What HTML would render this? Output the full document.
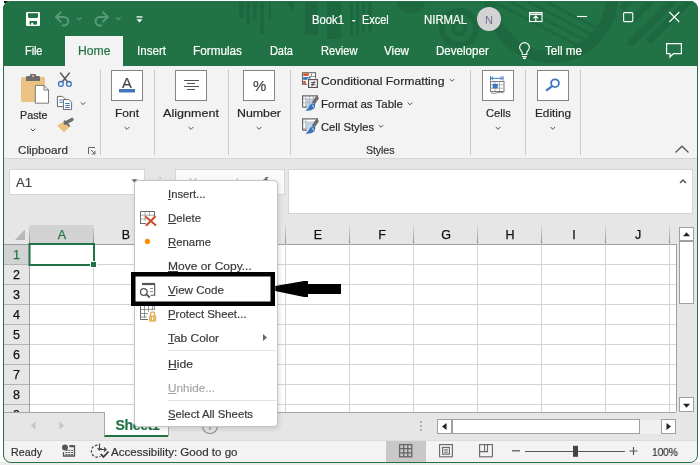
<!DOCTYPE html>
<html lang="en"><head><meta charset="utf-8"><title>Book1 - Excel</title>
<style>
html,body{margin:0;padding:0;}
body{width:700px;height:465px;overflow:hidden;background:#fff;font-family:"Liberation Sans",sans-serif;position:relative;}
#below{position:absolute;left:0;top:462px;width:700px;height:3px;background:#ececec;}
#win{position:absolute;left:3px;top:1px;width:695px;height:462px;border-radius:8px;overflow:hidden;background:#e6e6e6;}
#frame{position:absolute;left:3px;top:1px;width:693px;height:460px;border-radius:8px;border:1px solid #217346;pointer-events:none;}
.a{position:absolute;}
.t{position:absolute;white-space:nowrap;line-height:20px;height:20px;transform-origin:0 50%;-webkit-text-stroke:0.2px currentColor;}
.t u{text-decoration:underline;text-underline-offset:1px;}
#titlebar{left:0;top:0;width:695px;height:65px;background:#217346;}
#hometab{left:62px;top:35px;width:58px;height:31px;background:#f3f3f3;}
#ribbon{left:0;top:65px;width:695px;height:92px;background:#f3f3f3;border-bottom:1px solid #d4d4d4;}
.sep{position:absolute;top:69px;width:1px;height:85px;background:#c8c8c8;}
.bigbtn{position:absolute;top:69px;width:30px;height:29px;border:1px solid #848484;background:#fff;}
#namebox{left:6px;top:168px;width:134px;height:24px;border:1px solid #d6d6d6;background:#fff;}
#fxbtns{left:172px;top:168px;width:108px;height:24px;border:1px solid #d6d6d6;background:#fafafa;}
#fxinput{left:285px;top:168px;width:403px;height:43px;border:1px solid #d6d6d6;background:#fff;}
#grid{left:26px;top:244px;width:647px;height:168px;background:#fff;}
#colhdr{left:1px;top:224px;width:672px;height:19px;background:#e6e6e6;border-bottom:1px solid #9e9e9e;}
#rowhdr{left:1px;top:244px;width:25px;height:168px;background:#e6e6e6;border-right:1px solid #9e9e9e;}
.hl{position:absolute;background:#d2d2d2;}
.colh{position:absolute;top:0;height:18px;width:64px;text-align:center;font-size:12.5px;line-height:20px;color:#111;-webkit-text-stroke:0.25px currentColor;}
.rowh{position:absolute;left:0;width:25px;height:20px;text-align:center;font-size:12.5px;line-height:20px;color:#111;-webkit-text-stroke:0.25px currentColor;}
#tabbar{left:0;top:411px;width:695px;height:28px;background:#e6e6e6;}
#statusbar{left:0;top:439px;width:695px;height:23px;background:#f3f3f3;border-top:1px solid #dcdcdc;box-sizing:border-box;}
#sheettab{left:101px;top:411px;width:64px;height:23px;background:#fff;border-bottom:2px solid #217346;}
#menu{position:absolute;left:131px;top:179px;width:144px;height:247px;box-sizing:border-box;border:1px solid #c4c4c4;background:#fff;border-radius:4px;box-shadow:1px 2px 5px rgba(0,0,0,0.13);}
.msep{position:absolute;left:33px;width:108px;height:1px;background:#dfe2e6;}
svg{position:absolute;overflow:visible;}

#texts,#win{will-change:transform;}

</style></head>
<body>
<div id="below"></div>
<div id="blob" style="position:absolute;left:4px;top:1px;width:4px;height:2px;background:#111"></div>
<div id="win">
  <div class="a" id="titlebar"></div>
  <svg id="pattern" style="left:0;top:0" width="695" height="65" viewBox="3 1 695 65">
    <g fill="#1d683e">
      <rect x="239" y="1" width="5" height="17"/>
      <rect x="246" y="1" width="4" height="24"/>
      <rect x="253" y="1" width="4" height="19"/>
      <rect x="260" y="1" width="4" height="33"/>
      <rect x="269" y="1" width="2" height="20"/>
      <polygon points="285,1 294,1 294,12"/>
      <rect x="305" y="1" width="13" height="34"/>
      <rect x="327" y="1" width="14" height="38"/>
      <rect x="350" y="1" width="3" height="36"/>
      <rect x="356" y="1" width="3" height="36"/>
      <rect x="362" y="1" width="3" height="32"/>
      <rect x="368" y="1" width="4" height="30"/>
      <path d="M397,1 A14,12 0 0 0 425,1 Z"/>
    </g>
    <defs><clipPath id="ringclip"><circle cx="552" cy="-4" r="56"/></clipPath></defs>
    <g fill="none" stroke="#1d683e">
      <circle cx="459" cy="28" r="6" stroke-width="4"/>
      <circle cx="459" cy="28" r="17" stroke-width="6"/>
      <circle cx="551" cy="-4" r="61" stroke-width="12"/>
      <g clip-path="url(#ringclip)"><path d="M496,3 L596,55 M500,-4 L600,48 M504,-11 L604,41 M508,-18 L608,34" stroke-width="2.6"/></g>
      <path d="M633,-2 L622,9 M654,-2 L632,20 M676,-2 L629,45 M692,-2 L648,42" stroke-width="7"/>
    </g>
  </svg>
  <div class="a" id="hometab"></div>
  <div class="a" id="ribbon"></div>
  <div class="sep" style="left:97px"></div>
  <div class="sep" style="left:151px"></div>
  <div class="sep" style="left:225px"></div>
  <div class="sep" style="left:287px"></div>
  <div class="sep" style="left:467px"></div>
  <div class="sep" style="left:522px"></div>
  <div class="sep" style="left:577px"></div>
  <div class="bigbtn" style="left:108px"></div>
  <div class="bigbtn" style="left:172px"></div>
  <div class="bigbtn" style="left:240px"></div>
  <div class="bigbtn" style="left:479px"></div>
  <div class="bigbtn" style="left:534px"></div>

  <div class="a" id="namebox"></div>
  <div class="a" id="fxbtns"></div>
  <div class="a" id="fxinput"></div>

  <div class="a" id="colhdr">
    <div class="hl" style="left:26px;top:0;width:64px;height:19px"></div>
    <div class="colh" style="left:26px;color:#217346">A</div>
    <div class="colh" style="left:90px">B</div>
    <div class="colh" style="left:154px">C</div>
    <div class="colh" style="left:218px">D</div>
    <div class="colh" style="left:282px">E</div>
    <div class="colh" style="left:346px">F</div>
    <div class="colh" style="left:410px">G</div>
    <div class="colh" style="left:474px">H</div>
    <div class="colh" style="left:538px">I</div>
    <div class="colh" style="left:602px">J</div>
  </div>
  <div class="a" id="grid"></div>
  <div class="a" id="rowhdr">
    <div class="hl" style="left:0;top:0;width:25px;height:19px"></div>
    <div class="rowh" style="top:0px;color:#217346">1</div>
    <div class="rowh" style="top:20px">2</div>
    <div class="rowh" style="top:40px">3</div>
    <div class="rowh" style="top:60px">4</div>
    <div class="rowh" style="top:80px">5</div>
    <div class="rowh" style="top:100px">6</div>
    <div class="rowh" style="top:120px">7</div>
    <div class="rowh" style="top:140px">8</div>
    <div class="rowh" style="top:160px">9</div>
  </div>
  <svg id="gridlines" style="left:0;top:0" width="695" height="462" viewBox="3 1 695 462">
    <g stroke="#d4d4d4" stroke-width="1" shape-rendering="crispEdges">
      <path d="M30,264.5H676 M30,284.5H676 M30,304.5H676 M30,324.5H676 M30,344.5H676 M30,364.5H676 M30,384.5H676 M30,404.5H676"/>
      <path d="M93.5,244V412 M157.5,244V412 M221.5,244V412 M285.5,244V412 M349.5,244V412 M413.5,244V412 M477.5,244V412 M541.5,244V412 M605.5,244V412 M669.5,244V412"/>
    </g>
    <defs><linearGradient id="hsep" x1="0" y1="225" x2="0" y2="244" gradientUnits="userSpaceOnUse"><stop offset="0" stop-color="#dcdcdc"/><stop offset="1" stop-color="#8e8e8e"/></linearGradient></defs>
    <g fill="url(#hsep)" shape-rendering="crispEdges">
      <rect x="29" y="225" width="1" height="19"/><rect x="93" y="225" width="1" height="19"/><rect x="157" y="225" width="1" height="19"/><rect x="221" y="225" width="1" height="19"/><rect x="285" y="225" width="1" height="19"/><rect x="349" y="225" width="1" height="19"/><rect x="413" y="225" width="1" height="19"/><rect x="477" y="225" width="1" height="19"/><rect x="541" y="225" width="1" height="19"/><rect x="605" y="225" width="1" height="19"/><rect x="669" y="225" width="1" height="19"/>
    </g>
    <g stroke="#b4b4b4" stroke-width="1" shape-rendering="crispEdges">
      <path d="M4,264.5H29 M4,284.5H29 M4,304.5H29 M4,324.5H29 M4,344.5H29 M4,364.5H29 M4,384.5H29 M4,404.5H29"/>
    </g>
    <polygon points="25,229.5 25,240 15,240" fill="#b8b8b8"/>
    <!-- selected cell -->
    <rect x="29.5" y="244" width="64.5" height="21" fill="none" stroke="#217346" stroke-width="2"/>
    <rect x="90.5" y="261.5" width="6" height="6" fill="#217346" stroke="#fff" stroke-width="1"/>
    <!-- sheet right border / scroll -->
    <path d="M676.5,244V412" stroke="#a0a0a0" stroke-width="1" shape-rendering="crispEdges"/>
    
  </svg>

  <div class="a" id="tabbar"></div>
  <div class="a" id="sheettab"></div>
  <div class="a" id="statusbar"></div>
  <div class="a" style="left:383px;top:440px;width:40px;height:21px;background:#c8c8c8"></div>
  <span class="t" style="left:112.5px;top:414px;font-size:14px;font-weight:bold;color:#217346;letter-spacing:-0.3px">Sheet1</span>

  <svg id="chrome" style="left:0;top:0" width="695" height="462" viewBox="3 1 695 462">
    <path d="M4,412.5H104.5V436 M168.5,436V412.5H676" fill="none" stroke="#a6a6a6" stroke-width="1" shape-rendering="crispEdges"/>
    <!-- vertical scrollbar -->
    <g shape-rendering="crispEdges">
      <rect x="679.5" y="227.5" width="14" height="13" fill="#fff" stroke="#a0a0a0"/>
      <rect x="679.5" y="241.5" width="14" height="62" fill="#fff" stroke="#a0a0a0"/>
      <rect x="679.5" y="397.5" width="14" height="14" fill="#fff" stroke="#a0a0a0"/>
      <rect x="437.5" y="419.5" width="14" height="14" fill="#fff" stroke="#a0a0a0"/>
      <rect x="452.5" y="419.5" width="187" height="14" fill="#fff" stroke="#a0a0a0"/>
      <rect x="640" y="420" width="21" height="14" fill="#f0f0f0"/>
      <rect x="661.5" y="419.5" width="14" height="14" fill="#fff" stroke="#a0a0a0"/>
    </g>
    <polygon points="683,236.2 690,236.2 686.5,232.2" fill="#222"/>
    <polygon points="683,403.8 690,403.8 686.5,407.8" fill="#222"/>
    <polygon points="446.5,423 446.5,430 442,426.5" fill="#222"/>
    <polygon points="666.5,423 666.5,430 671,426.5" fill="#222"/>
    <g fill="#b0b0b0"><rect x="420" y="421" width="2" height="2"/><rect x="420" y="425" width="2" height="2"/><rect x="420" y="429" width="2" height="2"/></g>
    <polygon points="35.5,421.5 35.5,429.5 30.8,425.5" fill="#c6c6c6"/>
    <polygon points="59.5,421.5 59.5,429.5 64.2,425.5" fill="#c6c6c6"/>
    <circle cx="210" cy="426" r="7.5" fill="none" stroke="#8a8a8a" stroke-width="1.1"/>
    <path d="M206,426H214 M210,422V430" stroke="#8a8a8a" stroke-width="1.1"/>
  </svg>

  <svg id="icons1" style="left:0;top:0" width="695" height="462" viewBox="3 1 695 462">
    <!-- ===== title bar ===== -->
    <!-- save -->
    <rect x="26" y="12" width="14" height="14" rx="1.2" fill="#fff"/>
    <path d="M28,13.2H38V17L37.2,17.9H28.8L28,17Z" fill="#217346"/>
    <rect x="29.5" y="21" width="7.5" height="3.6" fill="#217346"/>
    <rect x="31.2" y="22.8" width="2" height="2.4" fill="#fff"/>
    <!-- undo / redo (disabled look) -->
    <g fill="none" stroke="#589b79" stroke-width="2" stroke-linecap="round" stroke-linejoin="round">
      <path d="M60.8,12.4 L56,17 L60.8,21.6"/>
      <path d="M56.4,17 H64 A4.2,4.2 0 0 1 64,25.4 H62.6"/>
      <path d="M103,12.4 L107.8,17 L103,21.6"/>
      <path d="M107.4,17 H99.8 A4.2,4.2 0 0 0 99.8,25.4 H101.2"/>
    </g>
    <g fill="none" stroke="#5c9a78" stroke-width="1.1">
      <path d="M77,17.5 L79.3,19.8 L81.6,17.5"/>
      <path d="M116,17.5 L118.3,19.8 L120.6,17.5"/>
    </g>
    <!-- customize QAT -->
    <rect x="136.5" y="16.3" width="6" height="1.3" fill="#fff"/>
    <polygon points="136.5,19.2 142.5,19.2 139.5,22.4" fill="#fff"/>
    <!-- avatar -->
    <circle cx="489" cy="19" r="12" fill="#d3d3d3"/>
    <!-- ribbon display options -->
    <g fill="none" stroke="#fff" stroke-width="1.1">
      <rect x="529.5" y="12.5" width="12.5" height="9"/>
      <path d="M529.5,14.3H542" stroke-width="1.6"/>
      <path d="M535.8,21V16.3 M533.4,18.4 L535.8,16 L538.2,18.4"/>
    </g>
    <!-- window controls -->
    <path d="M577,16.5H587" stroke="#fff" stroke-width="1.1"/>
    <rect x="623.6" y="12.6" width="9.2" height="9" rx="1" fill="none" stroke="#fff" stroke-width="1.1"/>
    <path d="M669.3,12 L679.3,22 M679.3,12 L669.3,22" stroke="#fff" stroke-width="1.1"/>
    <!-- lightbulb -->
    <g fill="none" stroke="#fff" stroke-width="1.2">
      <path d="M522.2,54.5 V52.8 C522.2,51 519.6,50 519.6,47.6 A4.9,4.9 0 0 1 529.4,47.6 C529.4,50 526.8,51 526.8,52.8 V54.5 Z"/>
      <path d="M522.3,56.6H526.7 M523,58.4H526"/>
    </g>
    <!-- comments -->
    <path d="M666.6,43.6 H681.4 V53.6 H673.5 L670,57 V53.6 H666.6 Z" fill="none" stroke="#fff" stroke-width="1.2"/>

    <!-- ===== ribbon ===== -->
    <!-- paste -->
    <rect x="21" y="77" width="24" height="25" rx="1.5" fill="#eac282"/>
    <path d="M26,81 V77.2 Q26,76 27.2,76 H30 V75 Q30,74 31,74 H35 Q36,74 36,75 V76 H38.8 Q40,76 40,77.2 V81 Z" fill="#6d6d6d"/>
    <rect x="32" y="75.2" width="2" height="1.6" fill="#eac282"/>
    <path d="M35.3,85.4 H44 L48.5,90 V103.2 H35.3 Z" fill="#fff" stroke="#7a7a7a" stroke-width="1"/>
    <path d="M44,85.4 V90 H48.5" fill="none" stroke="#7a7a7a" stroke-width="1"/>
    <path d="M30.7,128.7 L33,131 L35.3,128.7" fill="none" stroke="#505050" stroke-width="1"/>
    <!-- cut -->
    <g fill="none" stroke="#5a5a5a" stroke-width="1.5" stroke-linecap="round">
      <path d="M60.5,73 L67.6,82 M69.3,73 L62.2,82"/>
    </g>
    <circle cx="60.9" cy="83.9" r="2.4" fill="none" stroke="#3b78c3" stroke-width="1.3"/>
    <circle cx="68.9" cy="83.9" r="2.4" fill="none" stroke="#3b78c3" stroke-width="1.3"/>
    <!-- copy -->
    <path d="M57.4,96.4 H62.6 L65,98.8 V106.6 H57.4 Z" fill="#fff" stroke="#6a6a6a" stroke-width="1"/>
    <path d="M59.3,100H62.8 M59.3,102.3H62.8" stroke="#3b78c3" stroke-width="1"/>
    <path d="M63.4,99.6 H68.9 L71.6,102.3 V109.6 H63.4 Z" fill="#fff" stroke="#6a6a6a" stroke-width="1"/>
    <path d="M65.2,103.5H69.8 M65.2,105.5H69.8 M65.2,107.5H69.8" stroke="#3b78c3" stroke-width="1"/>
    <path d="M80.7,102.3 L83,104.6 L85.3,102.3" fill="none" stroke="#505050" stroke-width="1"/>
    <!-- format painter -->
    <polygon points="57,125.5 65,121 70,126.5 64,132.5" fill="#eac282"/>
    <path d="M65.2,123.2 L72,119.5" stroke="#6d6d6d" stroke-width="3.4" stroke-linecap="round"/>
    <path d="M64.2,120.8 L69.6,126.4" stroke="#6d6d6d" stroke-width="2"/>
    <!-- dialog launcher -->
    <path d="M88.5,154 V147.5 H95" fill="none" stroke="#666" stroke-width="1"/>
    <path d="M91,150 L95,154 M95,150.8 V154 H91.8" fill="none" stroke="#666" stroke-width="1"/>
    <!-- Font button -->
    <path d="M119,89H135V92.5H119Z" fill="#4377b8"/>
    <!-- alignment lines -->
    <path d="M183.5,80.5H198.5 M187,83.5H195 M183.5,86.5H198.5 M187,89.5H195" stroke="#555" stroke-width="1" shape-rendering="crispEdges"/>
    <!-- chevrons under big buttons -->
    <g fill="none" stroke="#505050" stroke-width="1">
      <path d="M124.7,127 L127,129.3 L129.3,127"/>
      <path d="M188.7,127 L191,129.3 L193.3,127"/>
      <path d="M256.7,127 L259,129.3 L261.3,127"/>
      <path d="M495.8,127 L498.1,129.3 L500.4,127"/>
      <path d="M550.5,127 L552.8,129.3 L555.1,127"/>
      <path d="M449.7,79 L452,81.3 L454.3,79"/>
      <path d="M407.7,102.5 L410,104.8 L412.3,102.5"/>
      <path d="M378.7,125 L381,127.3 L383.3,125"/>
    </g>
    <!-- conditional formatting -->
    <g>
      <rect x="302.5" y="72.7" width="13" height="11.6" fill="#fff" stroke="#6a6a6a" stroke-width="1.1"/>
      <rect x="303.2" y="73.3" width="5.6" height="2.6" fill="#d9502b"/>
      <rect x="303.2" y="77.1" width="7.6" height="2.7" fill="#3b73b9"/>
      <rect x="303.2" y="80.9" width="2.6" height="3" fill="#d9502b"/>
      <path d="M311.5,73.3V76.5 M309,76.5H315" stroke="#9a9a9a" stroke-width="1"/>
      <rect x="307.4" y="78.4" width="11" height="10" fill="#f3f3f3"/>
      <rect x="308.6" y="79.6" width="8.8" height="7.8" fill="#fff" stroke="#555" stroke-width="1.2"/>
      <path d="M310.8,82.6H315.4 M310.8,84.7H315.4 M314.4,81.2 L311.8,86.2" stroke="#333" stroke-width="0.9"/>
    </g>
    <!-- format as table -->
    <g>
      <rect x="302.5" y="95.8" width="15" height="11.5" fill="#fff"/>
      <rect x="306" y="99" width="7.2" height="8" fill="#bcd3ee"/>
      <path d="M305.8,96V107 M309.5,96V107 M313.2,96V102 M303,98.9H316 M303,102.9H313" stroke="#b4b4b4" stroke-width="0.9"/>
      <path d="M302.6,107.3 V95.9 H317.4 V98.5 M302.6,107.2 H307" fill="none" stroke="#6a6a6a" stroke-width="1.2"/>
      <path d="M317.6,97 L313.3,103.4" stroke="#6d6d6d" stroke-width="3.6"/>
      <path d="M315.2,104.2 Q312.2,102.2 309.6,105.4 Q308,108.2 305.6,110.7 Q311,111.2 314.2,108.4 Q316,106.4 315.2,104.2 Z" fill="#3b73b9"/>
      <path d="M312.2,105.2 Q313.6,105.6 313.6,107.4" fill="none" stroke="#fff" stroke-width="0.9"/>
    </g>
    <!-- cell styles -->
    <g>
      <rect x="302.5" y="118.8" width="15" height="11.5" fill="#fff"/>
      <rect x="306" y="122.4" width="8.2" height="6" fill="#bcd3ee"/>
      <path d="M305.7,119V130 M303,122H316 M303,128.6H309" stroke="#b4b4b4" stroke-width="0.9"/>
      <path d="M302.6,130.3 V118.9 H317.4 V121.5 M302.6,130.2 H307" fill="none" stroke="#6a6a6a" stroke-width="1.2"/>
      <path d="M317.6,120 L313.3,126.4" stroke="#6d6d6d" stroke-width="3.6"/>
      <path d="M315.2,127.2 Q312.2,125.2 309.6,128.4 Q308,131.2 305.6,133.7 Q311,134.2 314.2,131.4 Q316,129.4 315.2,127.2 Z" fill="#3b73b9"/>
      <path d="M312.2,128.2 Q313.6,128.6 313.6,130.4" fill="none" stroke="#fff" stroke-width="0.9"/>
    </g>
    <!-- cells icon -->
    <g>
      <path d="M490.5,76V80.5 M503,76V80.5 M491,78.3H502.5" stroke="#3b78c3" stroke-width="1"/>
      <path d="M493.2,76.6 L491.4,78.3 L493.2,80 M500.3,76.6 L502.1,78.3 L500.3,80" fill="none" stroke="#3b78c3" stroke-width="1"/>
      <rect x="490.5" y="81.5" width="13.5" height="10" fill="#fff" stroke="#7a7a7a" stroke-width="1"/>
      <path d="M495,82V91 M499.5,82V91 M491,84.8H504 M491,88.2H504" stroke="#a8a8a8" stroke-width="0.9"/>
      <rect x="492.6" y="83.8" width="5.2" height="4.6" fill="#3b78c3"/>
      <path d="M491,92.8 Q494,94 497,92.8 Q500,91.8 503.5,92.8" fill="none" stroke="#7a7a7a" stroke-width="0.9"/>
    </g>
    <!-- editing icon -->
    <circle cx="555" cy="83.2" r="3.9" fill="none" stroke="#3b78c3" stroke-width="1.8"/>
    <path d="M552.2,86.2 L546.8,90.2" stroke="#3b78c3" stroke-width="2.2" stroke-linecap="round"/>
    <!-- collapse ribbon -->
    <path d="M675.5,152.5 L682,146.2 L688.5,152.5" fill="none" stroke="#555" stroke-width="1.2"/>

    <!-- ===== formula bar ===== -->
    <polygon points="131.5,179.2 137.5,179.2 134.5,182.7" fill="#666"/>
    <g fill="#b8b8b8"><rect x="159.5" y="177" width="1.5" height="1.5"/><rect x="159.5" y="181" width="1.5" height="1.5"/><rect x="159.5" y="185" width="1.5" height="1.5"/></g>
    <path d="M189.5,178 L196.5,186 M196.5,178 L189.5,186" stroke="#c4c4c4" stroke-width="1.3"/>
    <path d="M229,183 L232,186.5 L238,178" fill="none" stroke="#c4c4c4" stroke-width="1.3"/>
    <path d="M680,183 L683,180 L686,183" fill="none" stroke="#555" stroke-width="1.5"/>

    <!-- ===== status bar ===== -->
    <circle cx="65" cy="447.6" r="3" fill="#555"/>
    <path d="M69.5,445.8 H74.5 V456 H63.5 V452" fill="none" stroke="#555" stroke-width="1.3"/>
    <path d="M69.5,446.3H74.5" stroke="#555" stroke-width="2"/>
    <path d="M65.5,450.3H73 M65.5,452.5H73 M65.5,454.5H73" stroke="#555" stroke-width="1" stroke-dasharray="2 0.8"/>
    <!-- accessibility -->
    <path d="M97.5,445.2 A6,6 0 1 0 100.5,456.3" fill="none" stroke="#444" stroke-width="1.2" stroke-dasharray="2.6 1.6"/>
    <path d="M99.5,443.5 V450 M97.5,448 L99.5,450.2 L101.5,448" fill="none" stroke="#444" stroke-width="1.1"/>
    <path d="M100,449.5 H106 M104,447.5 L106.2,449.5 L104,451.5" fill="none" stroke="#444" stroke-width="1.1"/>
    <path d="M100.8,454 L103.5,457 L108.5,451.5" fill="none" stroke="#333" stroke-width="1.7"/>
    <!-- view buttons -->
    <g fill="none" stroke="#666" stroke-width="1.3">
      <rect x="399.6" y="444.6" width="12.2" height="12.2"/>
      <path d="M403.7,444.6V456.8 M407.8,444.6V456.8 M399.6,448.7H411.8 M399.6,452.8H411.8"/>
    </g>
    <g fill="none" stroke="#666" stroke-width="1.1">
      <rect x="439.6" y="444.6" width="12.8" height="12.2"/>
      <rect x="442.6" y="447.4" width="6.8" height="6.8"/>
      <path d="M444.2,449.4H447.8 M444.2,450.9H447.8 M444.2,452.4H447.8" stroke-width="0.8"/>
      <rect x="479.6" y="444.6" width="12.8" height="12.2"/>
      <path d="M484.6,444.6V451.6 M479.6,451.6H487.5V444.6"/>
    </g>
    <!-- zoom slider -->
    <path d="M512,450.8H520" stroke="#555" stroke-width="1.2"/>
    <path d="M525,451.5H624.5" stroke="#555" stroke-width="1" shape-rendering="crispEdges"/>
    <rect x="573" y="445.8" width="5" height="11" fill="#444"/>
    <path d="M629.5,451H637.5 M633.5,447V455" stroke="#555" stroke-width="1.2"/>
  </svg>

<span class="t m" id="t38" style="left:259.50px;top:170.50px;font-size:13px;color:#555;transform:scaleX(1.1034);font-style:italic;font-family:"Liberation Serif",serif;">f</span>
  <!-- context menu -->
  <div id="menu">
    <div class="msep" style="top:169px"></div>
    <div class="msep" style="top:219px"></div>
  </div>
  <svg id="icons2" style="left:0;top:0" width="695" height="462" viewBox="3 1 695 462">
    <!-- delete -->
    <g>
      <path d="M140.5,224 V211.5 H154.5 V216" fill="none" stroke="#6a6a6a" stroke-width="1"/>
      <path d="M140.5,223.5 H146" stroke="#6a6a6a" stroke-width="1"/>
      <path d="M145,212V221 M149.5,212V216 M141,215.2H154 M141,219H146" stroke="#a0a0a0" stroke-width="0.9"/>
      <path d="M146,217 L155.5,225 M155,216.8 L146.5,225.2" stroke="#d04727" stroke-width="2" stroke-linecap="round"/>
    </g>
    <!-- rename dot -->
    <circle cx="147.4" cy="241.4" r="2.6" fill="#ff8c00"/>
    <!-- view code -->
    <g fill="none" stroke="#555">
      <path d="M142,284H155" stroke-width="2.2"/>
      <path d="M154.7,284 V295.2 H150.5" stroke-width="1.1"/>
      <path d="M150,288.5H153 M150,291.5H153" stroke="#8a8a8a" stroke-width="1"/>
      <circle cx="143.8" cy="292" r="3.3" stroke-width="1.3"/>
      <path d="M146.3,294.4 L149.3,297" stroke-width="1.8" stroke-linecap="round"/>
    </g>
    <!-- protect sheet -->
    <g>
      <path d="M140.5,306 V319.5 H148" fill="none" stroke="#6a6a6a" stroke-width="1"/>
      <path d="M144.5,306V318 M148.5,306V312 M152.5,306V310 M141,309.5H154 M141,313.5H148 M141,317H147 M154.5,306V310" stroke="#8a8a8a" stroke-width="0.9"/>
      <path d="M150.6,315.5 V314 A2,2 0 0 1 154.6,314 V315.5" fill="none" stroke="#e2b05c" stroke-width="1.3"/>
      <rect x="149" y="315.3" width="7.2" height="6.4" rx="0.6" fill="#e8b765"/>
      <path d="M152.6,317.2V320" stroke="#fff" stroke-width="1.1"/>
    </g>
    <!-- submenu arrow -->
    <polygon points="263,334 263,341 267,337.5" fill="#666"/>
  </svg>

  <svg id="anno" style="left:0;top:0" width="695" height="462" viewBox="3 1 695 462">
    <rect x="133.25" y="274.25" width="139.5" height="29.5" fill="none" stroke="#000" stroke-width="4.5"/>
    <polygon points="275.3,286 304,281 308,281 308,284 341,284 341,294 308,294 308,297 304,297 275.3,291" fill="#000"/>
  </svg>
</div>
<div id="frame"></div>

<div id="texts">
<span class="t m" id="t0" style="left:312.00px;top:9.50px;font-size:12px;color:#ffffff;transform:scaleX(0.9403);letter-spacing:0.000px;">Book1</span>
<span class="t m" id="t1" style="left:352.00px;top:9.50px;font-size:12px;color:#ffffff;transform:scaleX(0.8750);">-</span>
<span class="t m" id="t2" style="left:362.00px;top:9.50px;font-size:12px;color:#ffffff;transform:scaleX(0.9116);letter-spacing:0.000px;">Excel</span>
<span class="t m" id="t3" style="left:424.00px;top:9.50px;font-size:12px;color:#ffffff;transform:scaleX(0.9483);letter-spacing:0.000px;">NIRMAL</span>
<span class="t m" id="t4" style="left:485.00px;top:9.50px;font-size:11.5px;color:#70709a;transform:scaleX(0.9624);-webkit-text-stroke:0;">N</span>
<span class="t m" id="t5" style="left:24.50px;top:40.50px;font-size:12.3px;color:#ffffff;transform:scaleX(0.9000);letter-spacing:-0.128px;">File</span>
<span class="t m" id="t6" style="left:77.50px;top:40.50px;font-size:12.3px;color:#217346;transform:scaleX(0.9905);letter-spacing:0.000px;">Home</span>
<span class="t m" id="t7" style="left:137.00px;top:40.50px;font-size:12.3px;color:#ffffff;transform:scaleX(0.9426);letter-spacing:0.000px;">Insert</span>
<span class="t m" id="t8" style="left:193.00px;top:40.50px;font-size:12.3px;color:#ffffff;transform:scaleX(0.9561);letter-spacing:0.000px;">Formulas</span>
<span class="t m" id="t9" style="left:269.50px;top:40.50px;font-size:12.3px;color:#ffffff;transform:scaleX(0.9000);letter-spacing:-0.143px;">Data</span>
<span class="t m" id="t10" style="left:320.50px;top:40.50px;font-size:12.3px;color:#ffffff;transform:scaleX(0.9051);letter-spacing:0.000px;">Review</span>
<span class="t m" id="t11" style="left:384.00px;top:40.50px;font-size:12.3px;color:#ffffff;transform:scaleX(0.9456);letter-spacing:0.000px;">View</span>
<span class="t m" id="t12" style="left:436.00px;top:40.50px;font-size:12.3px;color:#ffffff;transform:scaleX(0.9409);letter-spacing:0.000px;">Developer</span>
<span class="t m" id="t13" style="left:545.00px;top:40.50px;font-size:12.3px;color:#ffffff;transform:scaleX(0.9499);letter-spacing:0.000px;">Tell me</span>
<span class="t m" id="t14" style="left:19.50px;top:104.50px;font-size:11.8px;color:#262626;transform:scaleX(0.9114);letter-spacing:0.000px;">Paste</span>
<span class="t m" id="t15" style="left:18.00px;top:140.00px;font-size:11.8px;color:#333;transform:scaleX(0.9901);letter-spacing:0.000px;">Clipboard</span>
<span class="t m" id="t16" style="left:115.00px;top:103.00px;font-size:11.8px;color:#262626;transform:scaleX(1.0165);letter-spacing:0.000px;">Font</span>
<span class="t m" id="t17" style="left:163.00px;top:103.00px;font-size:11.8px;color:#262626;transform:scaleX(1.0600);letter-spacing:0.045px;">Alignment</span>
<span class="t m" id="t18" style="left:237.00px;top:103.00px;font-size:11.8px;color:#262626;transform:scaleX(1.0484);letter-spacing:0.000px;">Number</span>
<span class="t m" id="t19" style="left:321.00px;top:70.50px;font-size:11.8px;color:#262626;transform:scaleX(1.0405);letter-spacing:0.000px;">Conditional Formatting</span>
<span class="t m" id="t20" style="left:321.00px;top:94.00px;font-size:11.8px;color:#262626;transform:scaleX(0.9719);letter-spacing:0.000px;">Format as Table</span>
<span class="t m" id="t21" style="left:321.00px;top:116.50px;font-size:11.8px;color:#262626;transform:scaleX(0.9509);letter-spacing:0.000px;">Cell Styles</span>
<span class="t m" id="t22" style="left:366.00px;top:140.00px;font-size:11.8px;color:#333;transform:scaleX(0.9000);letter-spacing:-0.092px;">Styles</span>
<span class="t m" id="t23" style="left:485.70px;top:103.00px;font-size:11.8px;color:#262626;transform:scaleX(0.9415);letter-spacing:0.000px;">Cells</span>
<span class="t m" id="t24" style="left:534.70px;top:103.00px;font-size:11.8px;color:#262626;transform:scaleX(0.9978);letter-spacing:0.000px;">Editing</span>
<span class="t m" id="t25" style="left:16.00px;top:172.50px;font-size:13px;color:#444;transform:scaleX(1.0059);letter-spacing:0.000px;">A1</span>
<span class="t m" id="t26" style="left:168.00px;top:184.00px;font-size:11.8px;color:#3a3a3a;transform:scaleX(0.9531);letter-spacing:0.000px;"><u>I</u>nsert...</span>
<span class="t m" id="t27" style="left:168.00px;top:207.50px;font-size:11.8px;color:#3a3a3a;transform:scaleX(0.9670);letter-spacing:0.000px;"><u>D</u>elete</span>
<span class="t m" id="t28" style="left:168.00px;top:231.50px;font-size:11.8px;color:#3a3a3a;transform:scaleX(0.9639);letter-spacing:0.000px;"><u>R</u>ename</span>
<span class="t m" id="t29" style="left:168.00px;top:255.50px;font-size:11.8px;color:#3a3a3a;transform:scaleX(1.0165);letter-spacing:0.000px;"><u>M</u>ove or Copy...</span>
<span class="t m" id="t30" style="left:168.00px;top:279.50px;font-size:11.8px;color:#3a3a3a;transform:scaleX(0.9852);letter-spacing:0.000px;"><u>V</u>iew Code</span>
<span class="t m" id="t31" style="left:168.00px;top:303.50px;font-size:11.8px;color:#3a3a3a;transform:scaleX(0.9652);letter-spacing:0.000px;"><u>P</u>rotect Sheet...</span>
<span class="t m" id="t32" style="left:168.00px;top:327.50px;font-size:11.8px;color:#3a3a3a;transform:scaleX(1.0099);letter-spacing:0.000px;"><u>T</u>ab Color</span>
<span class="t m" id="t33" style="left:168.00px;top:353.50px;font-size:11.8px;color:#3a3a3a;transform:scaleX(1.0296);letter-spacing:0.000px;"><u>H</u>ide</span>
<span class="t m" id="t34" style="left:168.00px;top:377.50px;font-size:11.8px;color:#a6a6a6;transform:scaleX(0.9950);letter-spacing:0.000px;"><u>U</u>nhide...</span>
<span class="t m" id="t35" style="left:168.00px;top:403.50px;font-size:11.8px;color:#3a3a3a;transform:scaleX(0.9599);letter-spacing:0.000px;"><u>S</u>elect All Sheets</span>
<span class="t m" id="t36" style="left:122.30px;top:72.60px;font-size:15px;color:#444;transform:scaleX(0.9785);">A</span>
<span class="t m" id="t37" style="left:252.90px;top:75.50px;font-size:15px;color:#444;transform:scaleX(0.9967);">%</span>
<span class="t m" id="t39" style="left:11.00px;top:442.00px;font-size:11.5px;color:#333;transform:scaleX(0.9323);letter-spacing:0.000px;">Ready</span>
<span class="t m" id="t40" style="left:111.00px;top:442.00px;font-size:11.5px;color:#333;transform:scaleX(1.0046);letter-spacing:0.000px;">Accessibility: Good to go</span>
<span class="t m" id="t41" style="left:651.75px;top:442.00px;font-size:11.5px;color:#333;transform:scaleX(0.9000);letter-spacing:-0.270px;">100%</span>
</div>
</body></html>
